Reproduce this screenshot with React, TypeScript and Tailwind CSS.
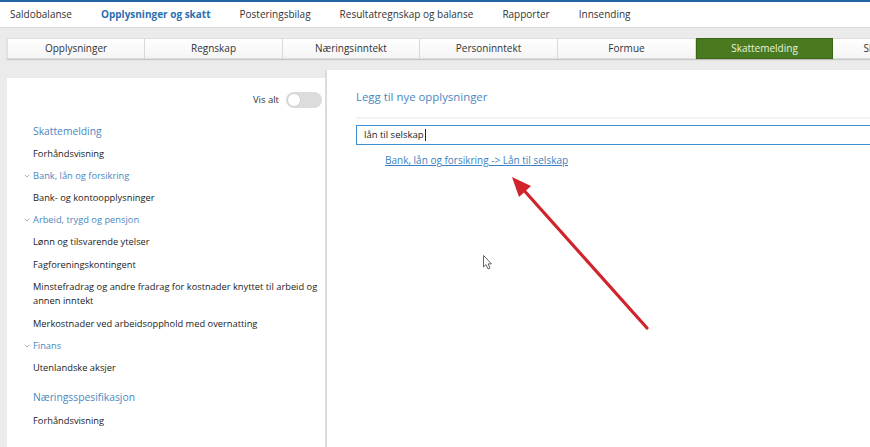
import { ChevronDown } from "lucide-react";

const topNav = [
  { label: "Saldobalanse" },
  { label: "Opplysninger og skatt", active: true },
  { label: "Posteringsbilag" },
  { label: "Resultatregnskap og balanse" },
  { label: "Rapporter" },
  { label: "Innsending" },
];

const tabs = [
  { label: "Opplysninger", w: "w-[138px]" },
  { label: "Regnskap", w: "w-[138px]" },
  { label: "Næringsinntekt", w: "w-[137px]" },
  { label: "Personinntekt", w: "w-[138px]" },
  { label: "Formue", w: "w-[138px]" },
  { label: "Skattemelding", w: "w-[137px]", active: true },
  { label: "Skatteberegning", w: "w-[138px]" },
];

type SideItem = {
  kind: "section" | "group" | "link";
  label: string;
  className?: string;
};

const sideItems: SideItem[] = [
  { kind: "section", label: "Skattemelding" },
  { kind: "link", label: "Forhåndsvisning" },
  { kind: "group", label: "Bank, lån og forsikring" },
  { kind: "link", label: "Bank- og kontoopplysninger" },
  { kind: "group", label: "Arbeid, trygd og pensjon" },
  { kind: "link", label: "Lønn og tilsvarende ytelser" },
  { kind: "link", label: "Fagforeningskontingent", className: "mt-[1px]" },
  {
    kind: "link",
    label: "Minstefradrag og andre fradrag for kostnader knyttet til arbeid og annen inntekt",
    className: "h-[36px] leading-[14px]",
  },
  { kind: "link", label: "Merkostnader ved arbeidsopphold med overnatting", className: "mt-[1px]" },
  { kind: "group", label: "Finans" },
  { kind: "link", label: "Utenlandske aksjer" },
  { kind: "section", label: "Næringsspesifikasjon", className: "mt-[8px]" },
  { kind: "link", label: "Forhåndsvisning", className: "mt-[1px]" },
];

function Toggle() {
  return (
    <div className="w-[36px] h-[16px] rounded-full bg-[#dcdcdc] flex items-center pl-[1px]">
      <div className="w-[14px] h-[14px] rounded-full bg-white border border-[#d0d0d0]" />
    </div>
  );
}

function Sidebar() {
  return (
    <aside className="w-[318px] mt-[8px] ml-[7px] bg-white self-stretch pt-[14px] pr-[3px]">
      <div className="flex items-center justify-end gap-[7px] h-[16px]">
        <span className="text-[9.5px] text-[#333]">Vis alt</span>
        <Toggle />
      </div>
      <div className="mt-[13px] pr-[3px]">
        {sideItems.map((item, i) => (
          <div
            key={i}
            className={`relative flex items-center pl-[26px] h-[22px] ${item.className ?? ""}`}
          >
            {item.kind === "group" && (
              <ChevronDown
                size={8}
                strokeWidth={1.8}
                className="absolute left-[16px] text-[#5b87ad]"
              />
            )}
            <span
              className={
                item.kind === "link"
                  ? "text-[9.3px] text-[#222]"
                  : item.kind === "group"
                    ? "text-[9.3px] text-[#4a87c0]"
                    : "text-[10.3px] text-[#4a87c0]"
              }
            >
              {item.label}
            </span>
          </div>
        ))}
      </div>
    </aside>
  );
}

function AddPanel() {
  return (
    <section className="flex-1 bg-white self-stretch border-l-[2px] border-[#dcdcdc] pl-[29px] overflow-hidden">
      <h2 className="pt-[18px] leading-[18px] text-[11.4px] text-[#4a87c0]">
        Legg til nye opplysninger
      </h2>
      <div className="mt-[11px] h-[2px] bg-[#f3f3f3] w-[600px]" />
      <div className="mt-[6px] w-[600px] h-[20px] border border-[#3f8fd2] flex items-center pl-[7px] text-[9.5px] text-[#222]">
        lån til selskap
        <span className="ml-[1px] w-px h-[12px] bg-[#222]" />
      </div>
      <a className="block mt-[7px] ml-[29px] leading-[16px] text-[10px] text-[#3d7fbf] underline">
        Bank, lån og forsikring -&gt; Lån til selskap
      </a>
    </section>
  );
}

function Overlay() {
  // red pointer arrow and mouse cursor drawn over the page
  return (
    <svg
      className="absolute inset-0 pointer-events-none"
      width={870}
      height={447}
      viewBox="0 0 870 447"
    >
      <line
        x1={647}
        y1={328}
        x2={521}
        y2={187}
        stroke="#d1232b"
        strokeWidth={3.2}
        strokeLinecap="round"
      />
      <polygon points="512,177 531,186 519,197" fill="#d1232b" />
      <path
        d="M483.5 255.5 L483.5 267 L486 264.6 L488 269 L490 268.1 L488.1 263.9 L491.5 263.9 Z"
        fill="#fff"
        stroke="#555"
        strokeWidth={0.9}
        strokeLinejoin="round"
      />
    </svg>
  );
}

export default function App() {
  return (
    <div className="relative w-[870px] h-[447px] overflow-hidden bg-[#ebebeb] font-['Open_Sans',sans-serif] flex flex-col">
      <div className="h-[2px] bg-[#2465a8]" />
      <nav className="h-[26px] bg-white border-b border-[#d9d9d9] flex items-center gap-[29px] pl-[10px] text-[10px] text-[#333]">
        {topNav.map((n) => (
          <span
            key={n.label}
            className={n.active ? "font-bold text-[#2a6fb0]" : ""}
          >
            {n.label}
          </span>
        ))}
      </nav>

      <div className="mt-[10px] ml-[7px] flex h-[21px] shrink-0">
        {tabs.map((t) => (
          <div
            key={t.label}
            className={
              t.active
                ? `${t.w} shrink-0 flex items-center justify-center text-[10px] text-[#e9f2df] bg-[#4a7a20] border border-[#3b6616] shadow-[0_1px_1px_rgba(0,0,0,0.2)] whitespace-nowrap`
                : `${t.w} shrink-0 flex items-center justify-center text-[10px] text-[#333] bg-gradient-to-b from-white to-[#f4f4f4] border-y border-r border-[#dedede] first:border-l shadow-[0_1px_1px_rgba(0,0,0,0.15)] whitespace-nowrap`
            }
          >
            {t.label}
          </div>
        ))}
      </div>

      <div className="flex flex-1 mt-[11px]">
        <Sidebar />
        <AddPanel />
      </div>

      <Overlay />
    </div>
  );
}
